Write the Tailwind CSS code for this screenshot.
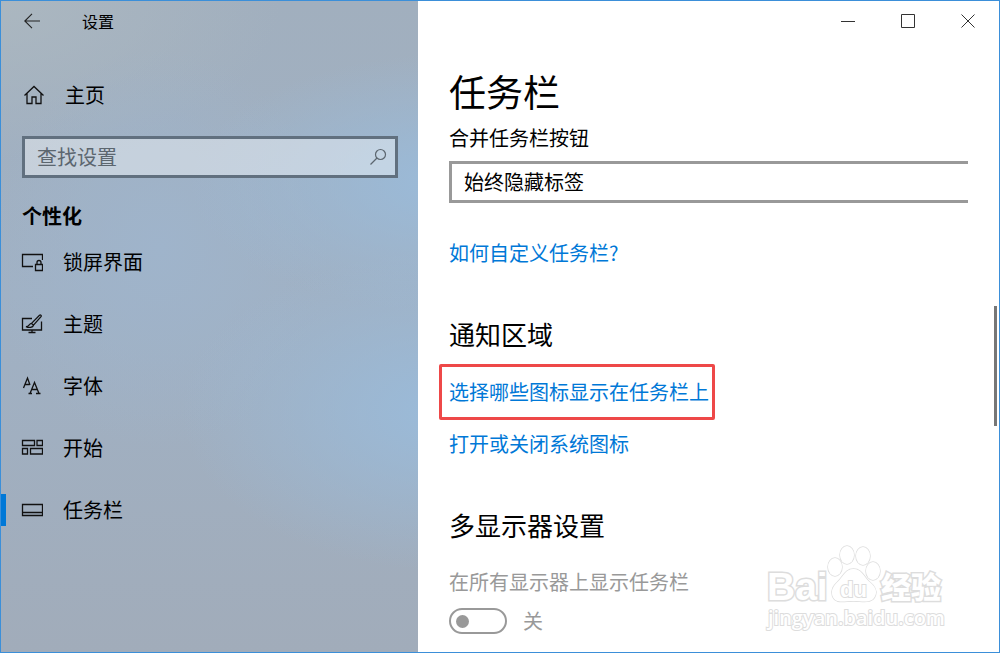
<!DOCTYPE html>
<html lang="zh-Hans">
<head>
	<meta charset="UTF-8">
	<meta name="viewport" content="width=device-width, initial-scale=1.0">
	<title>设置</title>
	<script src="https://cdn.jsdelivr.net/npm/@tailwindcss/browser@4"></script>
</head>
<body class="relative flex min-h-screen border border-[#3b8fd9] bg-white font-['Noto_Sans_CJK_SC',sans-serif] text-xl leading-7 text-black">

	<!-- 左侧导航 -->
	<aside class="w-[417px] shrink-0 bg-[#a1b0c1] bg-[radial-gradient(ellipse_270px_130px_at_110%_28%,#9abbda_0%,transparent_100%),radial-gradient(ellipse_270px_160px_at_108%_63%,#9abbda_0%,transparent_100%),radial-gradient(ellipse_170px_200px_at_38%_38%,#9fb4cb_0%,transparent_100%),radial-gradient(ellipse_280px_160px_at_0%_0%,#abb7c0_0%,transparent_100%),linear-gradient(to_bottom,#a1afbe_0%,#a0b1c4_45%,#a1acba_100%)]">
		<header class="flex h-10 items-center">
			<button type="button" aria-label="返回" class="ml-[21px] flex size-5 items-center justify-center">
				<svg class="size-4" viewBox="0 0 16 16" fill="none" stroke="#222" stroke-width="1.1"><path d="M16 8H1M8 .8L.8 8 8 15.2"/></svg>
			</button>
			<h1 class="ml-10 text-base">设置</h1>
		</header>

		<a href="#" class="mt-10 ml-[22px] flex h-7 items-center gap-5">
			<svg class="size-[22px]" viewBox="0 0 22 22" fill="none" stroke="#111" stroke-width="1.3"><path d="M1.5 11.5L11 2.5l9.5 9M4 9.5V19.500h5V13h4v6.500h5V9.500"/></svg>
			主页
		</a>

		<div class="mt-[27px] mr-5 ml-[21px] flex h-[42px] items-center border-[3px] border-[#61707f] bg-white/40 pr-2 pl-3">
			<input type="search" aria-label="查找设置" placeholder="查找设置" class="min-w-0 flex-1 bg-transparent placeholder:text-[#5c666f] focus:outline-none">
			<svg class="size-[18px]" viewBox="0 0 18 18" fill="none" stroke="#5c666f" stroke-width="1.2"><circle cx="11.5" cy="6.5" r="5"/><path d="M8 10L1.5 16.5"/></svg>
		</div>

		<h2 class="mt-6 ml-[21px] font-bold">个性化</h2>

		<nav class="[&>a]:flex [&>a]:h-[62px] [&>a]:items-center [&>a]:gap-5 [&>a]:pl-5 mt-px">
			<a href="#">
				<svg class="h-5 w-[22px]" viewBox="0 0 22 20" fill="none" stroke="#111" stroke-width="1.3"><path d="M12 14.500H1.500V2.500h20V8M14.500 12.500h7v6h-7zM16 12.500v-2a2 2 0 0 1 4 0v2"/></svg>
				锁屏界面
			</a>
			<a href="#">
				<svg class="h-5 w-[22px]" viewBox="0 0 22 20" fill="none" stroke="#111" stroke-width="1.3"><path d="M11 4.500H1.500v11.500h19V7.500M11 16v2.500M7.500 18.500h7M18.500 1.200c1-.7 2.200.3 1.500 1.400l-7.500 8.600-2-1.800zM10.500 9.400c-2.500 0-2 3.200-5.500 3.200 3.200 1.600 6.800.8 7.500-1.400"/></svg>
				主题
			</a>
			<a href="#">
				<svg class="h-5 w-[22px]" viewBox="0 0 22 20" fill="none" stroke="#111" stroke-width="1.3"><path d="M2.500 12L6.500 2l2.500 7M4 8.500h4.500"/><path d="M7.500 17.500h3.500M15 17.500h4.500M9 17.500L13.500 6.500l4.500 11M10.800 13.500h5.500"/></svg>
				字体
			</a>
			<a href="#">
				<svg class="h-5 w-[22px]" viewBox="0 0 22 20" fill="none" stroke="#111" stroke-width="1.3"><path d="M1.500 2.500h12v5h-12zM16 2.500h5.500v5H16zM1.500 10.500h5v5.500h-5zM9.500 10.500h12v5.500h-12z"/></svg>
				开始
			</a>
			<a href="#" aria-current="page" class="relative before:absolute before:left-0 before:h-8 before:w-[5px] before:bg-[#0078d7]">
				<svg class="h-5 w-[22px]" viewBox="0 0 22 20" fill="none" stroke="#111" stroke-width="1.3"><path d="M1.500 4.500h20v11h-20zM1.500 12.500h20"/></svg>
				任务栏
			</a>
		</nav>
	</aside>

	<!-- 任务栏设置 -->
	<main class="min-w-0 flex-1">
		<div class="mr-px flex h-10 justify-end [&>button]:flex [&>button]:w-[60px] [&>button]:items-center [&>button]:justify-center">
			<button type="button" aria-label="最小化"><svg class="size-[14px]" viewBox="0 0 14 14" stroke="#333"><path d="M0 7.500h14"/></svg></button>
			<button type="button" aria-label="最大化"><svg class="size-[14px]" viewBox="0 0 14 14" fill="none" stroke="#333"><path d="M.5.500h13v13H.5z"/></svg></button>
			<button type="button" aria-label="关闭"><svg class="size-[14px]" viewBox="0 0 14 14" stroke="#333"><path d="M.5.500l13 13M13.500.500l-13 13"/></svg></button>
		</div>

		<div class="mx-[31px]">
			<h2 class="mt-[26px] text-[37px] leading-[48px]">任务栏</h2>
			<label for="combine" class="mt-[9px] block">合并任务栏按钮</label>
			<select id="combine" class="mt-[9px] block h-[42px] w-full appearance-none border-[3px] border-r-0 border-[#999] bg-white pl-3">
				<option>始终隐藏标签</option>
			</select>
			<a href="#" class="mt-9 block w-fit text-[#0078d7]">如何自定义任务栏?</a>

			<h3 class="mt-[49px] text-[26px] leading-9">通知区域</h3>
			<div class="mt-3 -ml-[10px] flex h-14 w-fit items-center rounded-xs border-[3px] border-[#ee4848] pr-[3px] pl-[7px]">
				<a href="#" class="text-[#0078d7]">选择哪些图标显示在任务栏上</a>
			</div>
			<a href="#" class="mt-[10px] block w-fit text-[#0078d7]">打开或关闭系统图标</a>

			<h3 class="mt-[49px] text-[26px] leading-9">多显示器设置</h3>
			<div class="text-[#999]">
				<label for="allDisplays" class="mt-[25px] block">在所有显示器上显示任务栏</label>
				<div class="mt-[11px] flex h-7 items-center gap-4">
					<input id="allDisplays" type="checkbox" role="switch" disabled class="flex h-[26px] w-[58px] appearance-none items-center rounded-full border-2 border-[#999] before:ml-[5px] before:size-[13px] before:rounded-full before:bg-[#999]">
					<span>关</span>
				</div>
			</div>
		</div>
	</main>

	<!-- 滚动条 -->
	<div class="absolute top-[305px] right-[2px] h-[120px] w-[3px] bg-[#777]"></div>

	<!-- 水印 -->
	<svg class="pointer-events-none absolute right-[49px] bottom-4 h-24 w-[190px]" viewBox="0 0 190 96" fill="#fff" stroke="#ddd" stroke-width="2" paint-order="stroke">
		<g stroke-width="1.5">
			<ellipse cx="75" cy="27" rx="7" ry="9"/>
			<ellipse cx="87" cy="15" rx="7" ry="9"/>
			<ellipse cx="103" cy="16" rx="7" ry="9"/>
			<ellipse cx="113" cy="31" rx="7" ry="9"/>
			<path d="M93.500 29c8 0 10 7 15 12 6 5 9 9 7 14-3 9-12 6-22 6s-18 3-21-5c-2-6 1-10 6-15 5-5 7-12 15-12z"/>
		</g>
		<text x="7" y="60" class="font-['Liberation_Sans'] text-[39px] font-bold" stroke-width="3">Bai</text>
		<text x="80" y="57" class="font-['Liberation_Sans'] text-[22px] font-bold">du</text>
		<text x="121" y="58" class="font-['Noto_Sans_CJK_SC'] text-[30px] font-black" stroke-width="3">经验</text>
		<text x="8" y="85" class="font-['Open_Sans'] text-[20px] font-semibold">jingyan.baidu.com</text>
	</svg>

</body>
</html>
